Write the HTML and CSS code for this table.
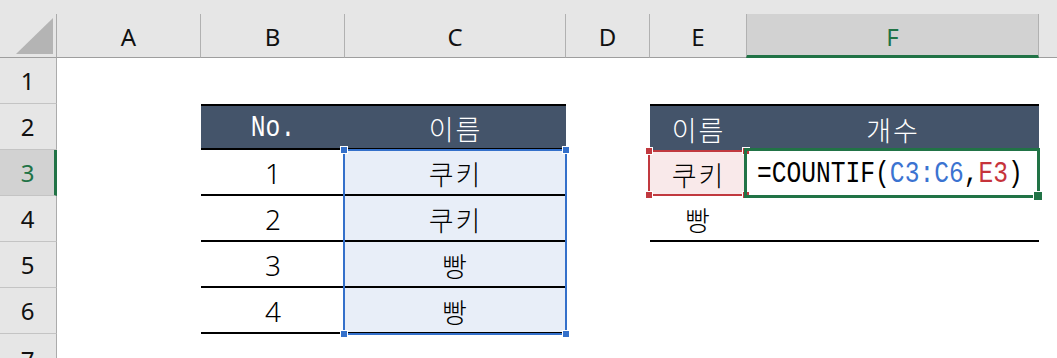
FILE: index.html
```html
<!DOCTYPE html>
<html lang="ko">
<head>
<meta charset="utf-8">
<link rel="stylesheet" href="styles.css">
</head>
<body>
<div class="sheet">
  <div class="band"></div>

  <div class="corner">
    <svg class="corner-tri" width="37" height="36" viewBox="0 0 37 36"><polygon points="37,0 37,36 0,36" fill="#b4b4b4"/></svg>
  </div>
  <div class="ch colA">A</div>
  <div class="ch colB">B</div>
  <div class="ch colC">C</div>
  <div class="ch colD">D</div>
  <div class="ch colE">E</div>
  <div class="ch colF ch-active">F</div>
  <div class="ch-rest"></div>

  <div class="rh row1">1</div>
  <div class="rh row2">2</div>
  <div class="rh row3 rh-active">3</div>
  <div class="rh row4">4</div>
  <div class="rh row5">5</div>
  <div class="rh row6">6</div>
  <div class="rh row7 rh-last">7</div>

  <!-- Table 1 -->
  <div class="cell colB row2 t-head"><span class="mono mono-c">No.</span></div>
  <div class="cell colC row2 t-head kr">이름</div>

  <div class="cell colB row3 t-row">1</div>
  <div class="cell colC row3 t-row sel kr">쿠키</div>
  <div class="cell colB row4 t-row">2</div>
  <div class="cell colC row4 t-row sel kr">쿠키</div>
  <div class="cell colB row5 t-row">3</div>
  <div class="cell colC row5 t-row sel kr">빵</div>
  <div class="cell colB row6 t-row">4</div>
  <div class="cell colC row6 t-row sel kr">빵</div>

  <!-- Table 2 -->
  <div class="cell colE row2 t-head2 kr">이름</div>
  <div class="cell colF row2 t-head2 kr">개수</div>
  <div class="cell colE row3 ref-red kr">쿠키</div>
  <div class="cell colF row3 formula"><span class="mono mono-l">=COUNTIF(<span class="f-blue">C3:C6</span>,<span class="f-red">E3</span>)</span></div>
  <div class="cell colE row4 t-row kr">빵</div>
  <div class="cell colF row4 t-row"></div>

  <!-- Overlays -->
  <div class="ov ov-blue">
    <span class="h h-tl"></span><span class="h h-tr"></span><span class="h h-bl"></span><span class="h h-br"></span>
  </div>
  <div class="ov ov-red">
    <span class="h h-tl"></span><span class="h h-tr"></span><span class="h h-bl"></span><span class="h h-br"></span>
  </div>
  <div class="ov ov-green">
    <span class="fill-handle"></span>
  </div>
</div>
</body>
</html>
```

FILE: styles.css
```css
* { box-sizing: border-box; }

html, body {
  margin: 0;
  padding: 0;
  background: #ffffff;
}

body {
  font-family: "Noto Sans", "Noto Sans CJK KR", sans-serif;
  color: #000;
  width: 1057px;
  height: 358px;
  overflow: hidden;
}

.sheet {
  display: grid;
  grid-template-columns: 57px 144px 144px 221px 84px 97px 292px 1fr;
  grid-template-rows: 14px 44px repeat(6, 46px) 1fr;
  height: 358px;
  width: 1057px;
}

.band {
  grid-column: 1 / -1;
  grid-row: 1;
  background: #e6e6e6;
}

/* grid placement */
.colA { grid-column: 2; }
.colB { grid-column: 3; }
.colC { grid-column: 4; }
.colD { grid-column: 5; }
.colE { grid-column: 6; }
.colF { grid-column: 7; }

.row1 { grid-row: 3; }
.row2 { grid-row: 4; }
.row3 { grid-row: 5; }
.row4 { grid-row: 6; }
.row5 { grid-row: 7; }
.row6 { grid-row: 8; }
.row7 { grid-row: 9; }

/* corner */
.corner {
  grid-column: 1;
  grid-row: 2;
  background: #e6e6e6;
  border-right: 1px solid #ababab;
  border-bottom: 1px solid #9e9e9e;
  padding: 4px 0 0 16px;
}
.corner-tri { display: block; }

/* column headers */
.ch {
  grid-row: 2;
  background: #e6e6e6;
  border-right: 1px solid #b1b1b1;
  border-bottom: 1px solid #9e9e9e;
  display: flex;
  align-items: center;
  justify-content: center;
  font-size: 24px;
  padding-top: 2px;
  color: #111;
}
.ch-active {
  background: #d2d2d2;
  border-left: 1px solid #b1b1b1;
  border-bottom: 3px solid #217346;
  color: #217346;
  margin-left: -1px;
  padding-top: 4px;
}
.ch-rest {
  grid-column: 8;
  grid-row: 2;
  background: #e6e6e6;
  border-bottom: 1px solid #9e9e9e;
}

/* row headers */
.rh {
  grid-column: 1;
  background: #e6e6e6;
  border-right: 1px solid #ababab;
  border-bottom: 1px solid #c4c4c4;
  display: flex;
  align-items: center;
  justify-content: center;
  font-size: 24px;
  padding-right: 1px;
  color: #111;
}
.rh-active {
  background: #d2d2d2;
  border-right: 3px solid #217346;
  color: #217346;
  padding-left: 2px;
}
.rh-last {
  align-items: flex-start;
  padding-top: 9px;
  border-bottom: none;
}

/* cells */
.cell {
  display: flex;
  align-items: center;
  justify-content: center;
  font-size: 28px;
  font-weight: 300;
  padding-top: 2px;
  white-space: nowrap;
}
.kr {
  font-family: "Noto Sans CJK KR", sans-serif;
  font-size: 27px;
  letter-spacing: 2px;
  font-weight: 300;
}
.mono {
  display: inline-block;
  font-family: "Liberation Mono", monospace;
  font-size: 30px;
  font-weight: 400;
  transform: scaleX(0.82);
}
.mono-c { transform-origin: center; }
.mono-l { transform-origin: left center; }

.t-head {
  background: #44546a;
  color: #ffffff;
  border-top: 2px solid #000;
  border-bottom: 2px solid #000;
}
.t-head2 {
  background: #44546a;
  color: #ffffff;
  border-top: 2px solid #000;
}
.t-row {
  border-bottom: 2px solid #000;
}
.sel {
  background: #e8eef8;
}
.ref-red {
  background: #f9e9ea;
}
.formula {
  justify-content: flex-start;
  padding-left: 10px;
}
.f-blue { color: #3b73d1; }
.f-red { color: #c6333b; }

/* overlays */
.ov {
  position: relative;
  pointer-events: none;
}
.ov-blue {
  grid-column: 4;
  grid-row: 5 / 9;
  border: 2px solid #3470ca;
  margin: -1px -1px -1px -2px;
  --hc: #3470ca;
}
.ov-red {
  grid-column: 6;
  grid-row: 5;
  border: 2px solid #c1393f;
  margin: 0 0 0 -2px;
  --hc: #c1393f;
}
.h {
  position: absolute;
  width: 8px;
  height: 8px;
  background: var(--hc);
  border: 1px solid #fff;
}
.h-tl { left: -5px; top: -5px; }
.h-tr { right: -5px; top: -5px; }
.h-bl { left: -5px; bottom: -5px; }
.h-br { right: -5px; bottom: -5px; }

.ov-green {
  grid-column: 7;
  grid-row: 5;
  border: 3px solid #217346;
  margin: -2px -1px -2px -3px;
}
.fill-handle {
  position: absolute;
  right: -5px;
  bottom: -5px;
  width: 9px;
  height: 9px;
  background: #217346;
  border-top: 1px solid #fff;
  border-left: 1px solid #fff;
}
```
